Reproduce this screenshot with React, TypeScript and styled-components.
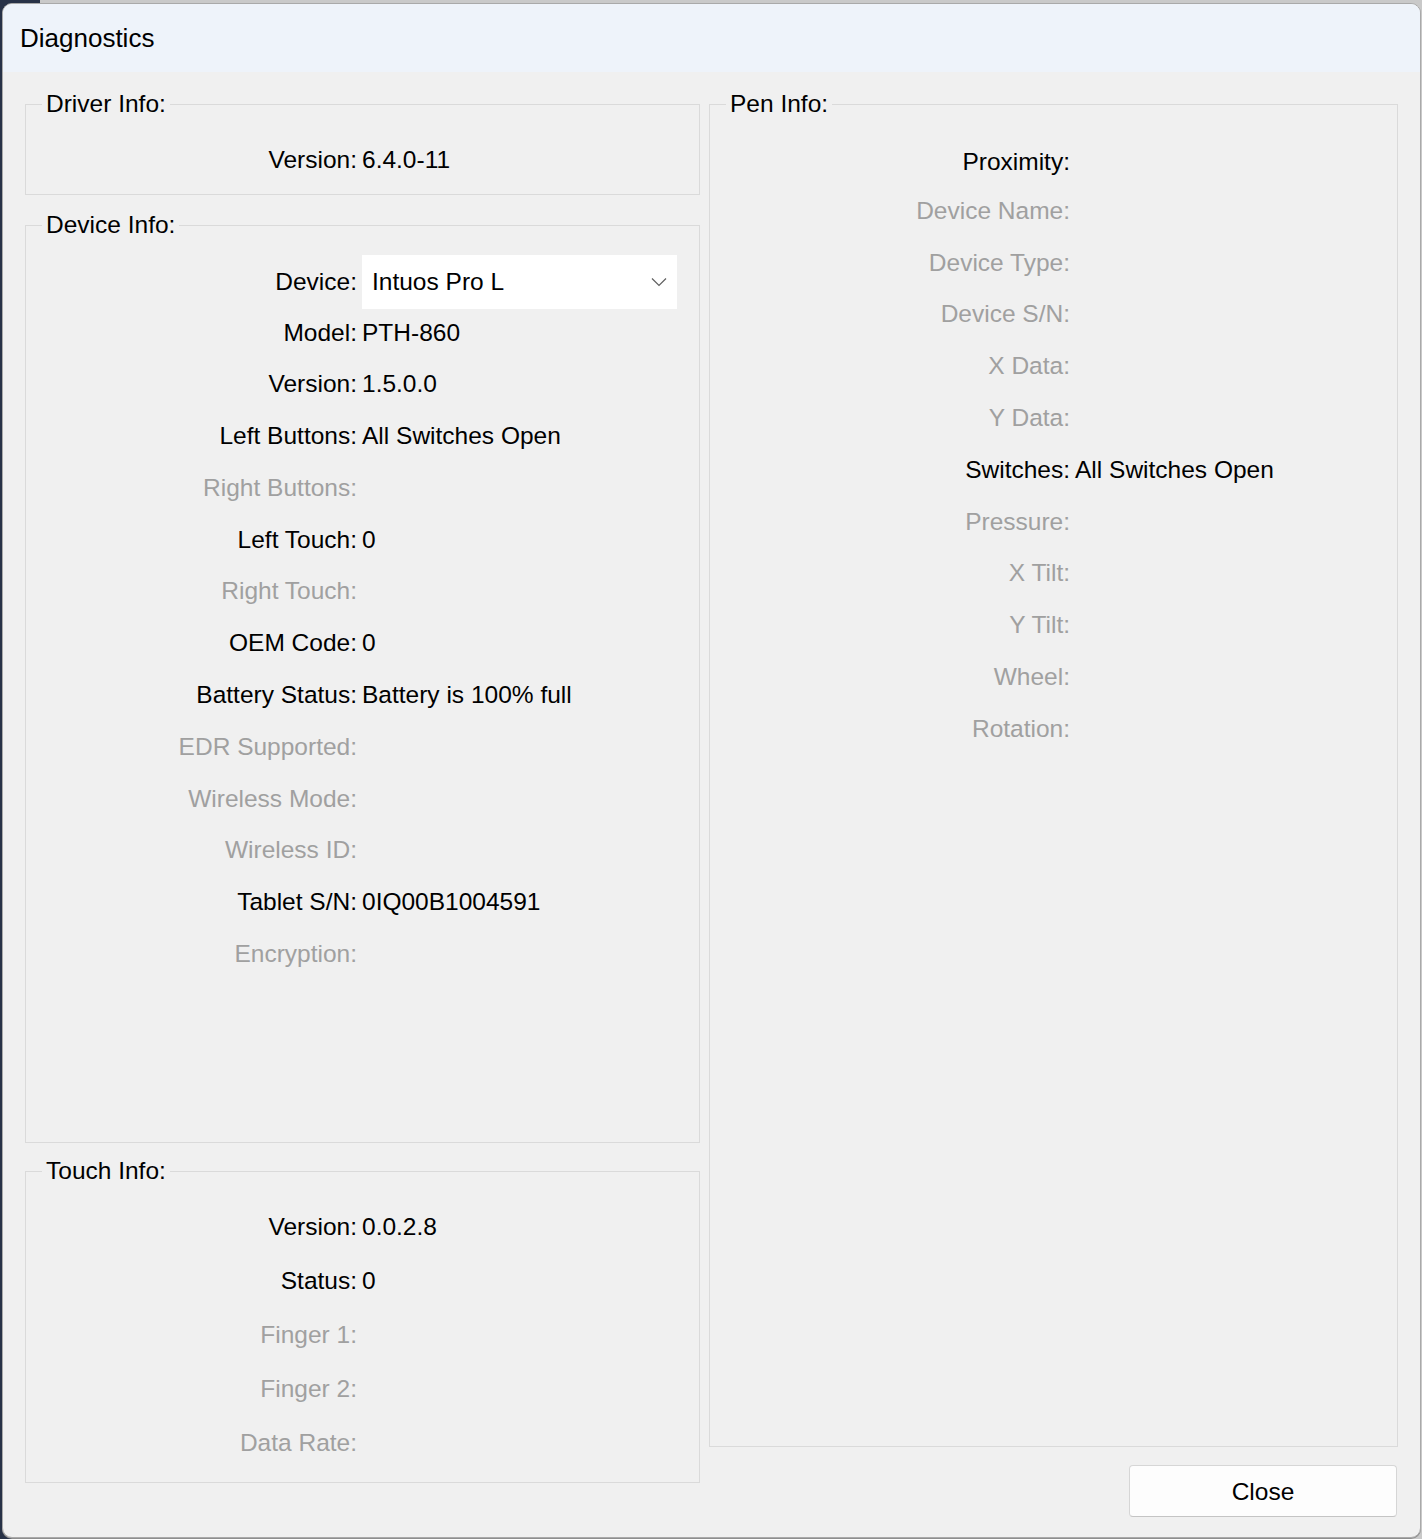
import React from "react";
import styled, { createGlobalStyle } from "styled-components";

const Global = createGlobalStyle`
  html, body { margin: 0; padding: 0; }
  body {
    width: 1422px;
    height: 1539px;
    overflow: hidden;
    background: linear-gradient(to right, #283247 0 40px, #c9c9c9 40px);
    font-family: "Liberation Sans", Arial, sans-serif;
  }
  * { box-sizing: border-box; }
`;

const Window = styled.div`
  width: 1419px;
  height: 1535px;
  margin: 3px 0 0 2px;
  border: 1px solid #a9a9a9;
  border-radius: 10px;
  overflow: hidden;
  background: #f0f0f0;
  display: flex;
  flex-direction: column;
  box-shadow: 0 1px 0 #8e8e8e;
`;

const TitleBar = styled.div`
  height: 68px;
  flex: none;
  background: #eef3fa;
  display: flex;
  align-items: center;
  padding-left: 17px;
  font-size: 26px;
  color: #000;
`;

const Body = styled.div`
  flex: 1;
  display: grid;
  grid-template-columns: 675px 689px;
  column-gap: 9px;
  padding: 18px 21px 20px 22px;
  min-height: 0;
`;

const Column = styled.div<{ $bottom?: number }>`
  display: flex;
  flex-direction: column;
  min-height: 0;
  margin-bottom: ${(p) => p.$bottom ?? 0}px;
`;

const Group = styled.fieldset<{ $grow?: boolean; $top: number; $bottom: number; $gap?: number }>`
  margin: ${(p) => p.$gap ?? 0}px 0 0 0;
  padding: ${(p) => p.$top}px 0 ${(p) => p.$bottom}px 0;
  border: 1px solid #dadada;
  min-width: 0;
  flex: ${(p) => (p.$grow ? "1 1 auto" : "none")};
  display: flex;
  flex-direction: column;
`;

const Legend = styled.legend`
  margin-left: 16px;
  padding: 0 4px;
  font-size: 24.5px;
  line-height: 28px;
  color: #000;
`;

const Row = styled.div<{ $h: number; $label: number }>`
  display: grid;
  grid-template-columns: ${(p) => p.$label}px auto;
  column-gap: 5px;
  align-items: center;
  height: ${(p) => p.$h}px;
  font-size: 24.5px;
  white-space: nowrap;
`;

const Label = styled.span<{ $dim?: boolean }>`
  text-align: right;
  color: ${(p) => (p.$dim ? "#a0a0a0" : "#000")};
`;

const Value = styled.span`
  color: #000;
`;

const Select = styled.div`
  width: 315px;
  height: 54px;
  background: #fff;
  display: flex;
  align-items: center;
  justify-content: space-between;
  padding: 0 10px 0 10px;
  font-size: 24.5px;
  color: #000;
`;

const ButtonRow = styled.div`
  display: flex;
  justify-content: flex-end;
  margin-top: 18px;
  padding-right: 1px;
`;

const CloseButton = styled.button`
  width: 268px;
  height: 52px;
  background: #fdfdfd;
  border: 1px solid #d6d6d6;
  border-bottom-color: #c4c4c4;
  border-radius: 4px;
  font-family: "Liberation Sans", Arial, sans-serif;
  font-size: 24.5px;
  color: #000;
  padding: 2px 0 0 0;
`;

type Item = { label: string; value?: string; dim?: boolean };

const deviceRows: Item[] = [
  { label: "Model:", value: "PTH-860" },
  { label: "Version:", value: "1.5.0.0" },
  { label: "Left Buttons:", value: "All Switches Open" },
  { label: "Right Buttons:", dim: true },
  { label: "Left Touch:", value: "0" },
  { label: "Right Touch:", dim: true },
  { label: "OEM Code:", value: "0" },
  { label: "Battery Status:", value: "Battery is 100% full" },
  { label: "EDR Supported:", dim: true },
  { label: "Wireless Mode:", dim: true },
  { label: "Wireless ID:", dim: true },
  { label: "Tablet S/N:", value: "0IQ00B1004591" },
  { label: "Encryption:", dim: true },
];

const touchRows: Item[] = [
  { label: "Version:", value: "0.0.2.8" },
  { label: "Status:", value: "0" },
  { label: "Finger 1:", dim: true },
  { label: "Finger 2:", dim: true },
  { label: "Data Rate:", dim: true },
];

const penRows: Item[] = [
  { label: "Device Name:", dim: true },
  { label: "Device Type:", dim: true },
  { label: "Device S/N:", dim: true },
  { label: "X Data:", dim: true },
  { label: "Y Data:", dim: true },
  { label: "Switches:", value: "All Switches Open" },
  { label: "Pressure:", dim: true },
  { label: "X Tilt:", dim: true },
  { label: "Y Tilt:", dim: true },
  { label: "Wheel:", dim: true },
  { label: "Rotation:", dim: true },
];

const Chevron = () => (
  <svg width="16" height="10" viewBox="0 0 16 10" fill="none">
    <polyline points="1,1.5 8,8.5 15,1.5" stroke="#5f5f5f" strokeWidth="1.2" />
  </svg>
);

const renderRows = (rows: Item[], h: number, label: number) =>
  rows.map((r) => (
    <Row key={r.label} $h={h} $label={label}>
      <Label $dim={r.dim}>{r.label}</Label>
      {r.value ? <Value>{r.value}</Value> : <span />}
    </Row>
  ));

export default function App() {
  return (
    <>
      <Global />
      <Window>
        <TitleBar>Diagnostics</TitleBar>
        <Body>
          <Column $bottom={34}>
            <Group $top={16} $bottom={8}>
              <Legend>Driver Info:</Legend>
              <Row $h={52} $label={331}>
                <Label>Version:</Label>
                <Value>6.4.0-11</Value>
              </Row>
            </Group>
            <Group $grow $gap={16} $top={16} $bottom={8}>
              <Legend>Device Info:</Legend>
              <Row $h={51.77} $label={331}>
                <Label>Device:</Label>
                <Select>
                  <span>Intuos Pro L</span>
                  <Chevron />
                </Select>
              </Row>
              {renderRows(deviceRows, 51.77, 331)}
            </Group>
            <Group $gap={14} $top={15} $bottom={12}>
              <Legend>Touch Info:</Legend>
              {renderRows(touchRows, 54, 331)}
            </Group>
          </Column>
          <Column>
            <Group $grow $top={21} $bottom={8}>
              <Legend>Pen Info:</Legend>
              <Row $h={46} $label={360}>
                <Label>Proximity:</Label>
                <span />
              </Row>
              {renderRows(penRows, 51.8, 360)}
            </Group>
            <ButtonRow>
              <CloseButton>Close</CloseButton>
            </ButtonRow>
          </Column>
        </Body>
      </Window>
    </>
  );
}
